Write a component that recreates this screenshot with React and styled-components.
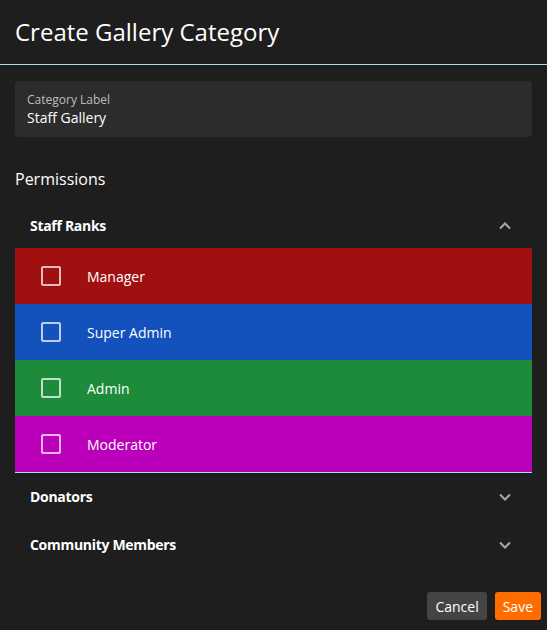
import React from "react";
import styled, { createGlobalStyle } from "styled-components";

const GlobalStyle = createGlobalStyle`
  html, body {
    margin: 0;
    padding: 0;
    background: #1e1e1e;
  }
  body {
    font-family: "Open Sans", "Noto Sans", sans-serif;
    color: #fff;
  }
`;

const Dialog = styled.div`
  width: 547px;
  height: 630px;
  background: #1e1e1e;
  display: flex;
  flex-direction: column;
`;

const Header = styled.header`
  height: 65px;
  border-bottom: 1px solid #a5e0ea;
  display: flex;
  align-items: center;
  padding: 0 15px 1px;
  box-sizing: border-box;

  h1 {
    margin: 0;
    font-size: 24px;
    font-weight: 400;
    color: #fff;
  }
`;

const Body = styled.div`
  padding: 16px 15px 0;
  display: flex;
  flex-direction: column;
  flex: 1;
`;

const TextField = styled.div`
  background: #2c2c2c;
  border-radius: 4px;
  height: 56px;
  padding: 11px 12px 0;
  box-sizing: border-box;
  display: flex;
  flex-direction: column;

  label {
    font-size: 12px;
    color: #bdbdbd;
    line-height: 16px;
  }

  span {
    font-size: 14px;
    color: #fff;
    line-height: 20px;
  }
`;

const SectionTitle = styled.h2`
  margin: 30px 0 0;
  font-size: 16px;
  font-weight: 400;
  color: #fff;
  line-height: 24px;
`;

const Group = styled.div`
  display: flex;
  flex-direction: column;
  border-bottom: ${(p) => (p.open ? "1px solid #a5e0ea" : "none")};
`;

const GroupHeader = styled.div`
  height: ${(p) => (p.open ? "57px" : "48px")};
  display: flex;
  align-items: center;
  justify-content: space-between;
  padding: ${(p) => (p.open ? "12px 20px 0 15px" : "0 20px 1px 15px")};
  box-sizing: border-box;

  span {
    font-size: 14px;
    font-weight: 700;
    color: #fff;
    letter-spacing: -0.3px;
  }
`;

const Chevron = styled.svg`
  width: 14px;
  height: 14px;
  color: #a8a8a8;
`;

const RankRow = styled.div`
  height: 56px;
  background: ${(p) => p.color};
  display: flex;
  align-items: center;
  padding-left: 26px;
  gap: 26px;
`;

const Box = styled.span`
  width: 20px;
  height: 20px;
  box-sizing: border-box;
  border: 2px solid rgba(255, 255, 255, 0.72);
  border-radius: 2px;
`;

const RankName = styled.span`
  font-size: 14px;
  color: #fff;
`;

const Footer = styled.footer`
  display: flex;
  justify-content: flex-end;
  gap: 8px;
  padding: 0 6px 10px 0;
  margin-top: auto;
`;

const Button = styled.button`
  height: 28px;
  padding: 0 8px;
  border: none;
  border-radius: 3px;
  background: ${(p) => (p.primary ? "#ff6d00" : "#444444")};
  color: #fff;
  font-family: "Open Sans", sans-serif;
  font-size: 14px;
  cursor: pointer;
`;

const ChevronIcon = ({ up }) => (
  <Chevron viewBox="0 0 14 14" fill="none">
    <path
      d={up ? "M2 9.5 L7 4.5 L12 9.5" : "M2 4.5 L7 9.5 L12 4.5"}
      stroke="currentColor"
      strokeWidth="2"
    />
  </Chevron>
);

const ranks = [
  { name: "Manager", color: "#a01010" },
  { name: "Super Admin", color: "#1351bd" },
  { name: "Admin", color: "#1d8b39" },
  { name: "Moderator", color: "#bb00bb" },
];

export default function App() {
  return (
    <>
      <GlobalStyle />
      <Dialog>
        <Header>
          <h1>Create Gallery Category</h1>
        </Header>
        <Body>
          <TextField>
            <label>Category Label</label>
            <span>Staff Gallery</span>
          </TextField>
          <SectionTitle>Permissions</SectionTitle>
          <Group open>
            <GroupHeader open>
              <span>Staff Ranks</span>
              <ChevronIcon up />
            </GroupHeader>
            {ranks.map((r) => (
              <RankRow key={r.name} color={r.color}>
                <Box />
                <RankName>{r.name}</RankName>
              </RankRow>
            ))}
          </Group>
          <Group>
            <GroupHeader>
              <span>Donators</span>
              <ChevronIcon />
            </GroupHeader>
          </Group>
          <Group>
            <GroupHeader>
              <span>Community Members</span>
              <ChevronIcon />
            </GroupHeader>
          </Group>
        </Body>
        <Footer>
          <Button>Cancel</Button>
          <Button primary>Save</Button>
        </Footer>
      </Dialog>
    </>
  );
}
